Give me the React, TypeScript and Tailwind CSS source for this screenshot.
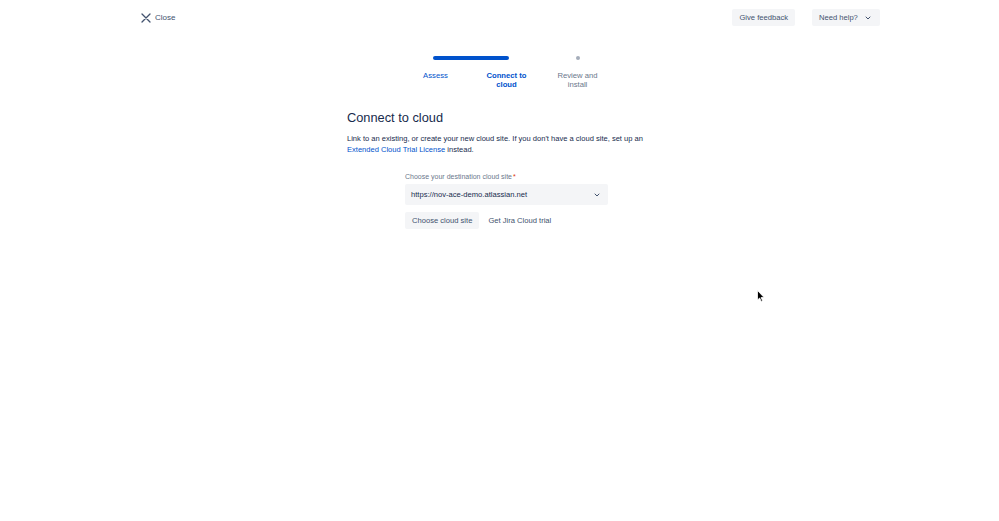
import { ChevronDown } from 'lucide-react'

const font = { fontFamily: '"Liberation Sans", Arial, sans-serif' }

function CloseIcon() {
  return (
    <svg width="10" height="10" viewBox="0 0 10 10" className="shrink-0">
      <path d="M1 1 9 9M9 1 1 9" stroke="#42526e" strokeWidth="1.3" strokeLinecap="round" />
    </svg>
  )
}

function Cursor() {
  return (
    <svg width="8" height="12" viewBox="0 0 8 12" className="absolute left-[757px] top-[290px]">
      <path d="M0.5 0.5v9.5l2.2-2 1.5 3.4 1.4-.6-1.5-3.3h3z" fill="#000" stroke="#fff" strokeWidth="0.8" />
    </svg>
  )
}

export default function App() {
  return (
    <div className="relative min-h-[521px] w-full bg-white text-[#172b4d]" style={font}>
      <header className="flex items-center justify-between pl-[141px] pr-[119px] pt-[9px]">
        <button className="flex items-center gap-[4px] text-[8px] text-[#42526e]">
          <CloseIcon />
          Close
        </button>
        <div className="flex items-center gap-[17px]">
          <button className="h-[17px] rounded-[2px] bg-[#f4f5f7] px-[7px] text-[7.6px] text-[#42526e]">
            Give feedback
          </button>
          <button className="flex h-[17px] w-[68px] items-center gap-[6px] rounded-[2px] bg-[#f4f5f7] pl-[7px] text-[7.6px] text-[#42526e]">
            Need help?
            <ChevronDown size={8} strokeWidth={3} />
          </button>
        </div>
      </header>

      <div className="mt-[30px] flex items-center pl-[433px]">
        <div className="h-[4px] w-[76px] rounded-full bg-[#0052cc]" />
        <div className="ml-[67px] h-[4px] w-[4px] rounded-full bg-[#a5adba]" />
      </div>
      <div className="ml-[400px] mt-[11px] grid w-[213px] grid-cols-3 text-center text-[7.7px] leading-[9px]">
        <span className="text-[#0052cc]">Assess</span>
        <span className="font-bold text-[#0052cc]">
          Connect to
          <br />
          cloud
        </span>
        <span className="text-[#6b778c]">
          Review and
          <br />
          install
        </span>
      </div>

      <div className="ml-[347px] mt-[21px] w-[312px]">
        <h1 className="text-[12.8px] leading-[15px] font-normal">Connect to cloud</h1>
        <p className="mt-[8px] text-[7.55px] leading-[11px]">
          Link to an existing, or create your new cloud site. If you don't have a cloud site, set up an{' '}
          <a className="text-[#0052cc]">Extended Cloud Trial License</a> instead.
        </p>
      </div>

      <div className="ml-[405px] mt-[17px] w-[203px]">
        <label className="block text-[7px] leading-[9px] text-[#6b778c]">
          Choose your destination cloud site<span className="ml-[1px] text-[#de350b]">*</span>
        </label>
        <div className="mt-[3px] flex h-[21px] items-center justify-between rounded-[2px] bg-[#f4f5f7] pl-[6px] pr-[7px] text-[7.6px]">
          <span>https://nov-ace-demo.atlassian.net</span>
          <ChevronDown size={8} strokeWidth={3} className="text-[#42526e]" />
        </div>
        <div className="mt-[7px] flex items-center gap-[2px]">
          <button className="h-[17px] rounded-[2px] bg-[#f4f5f7] px-[7px] text-[7.6px] text-[#42526e]">
            Choose cloud site
          </button>
          <button className="h-[17px] rounded-[2px] px-[7px] text-[7.6px] text-[#42526e]">
            Get Jira Cloud trial
          </button>
        </div>
      </div>

      <Cursor />
    </div>
  )
}
